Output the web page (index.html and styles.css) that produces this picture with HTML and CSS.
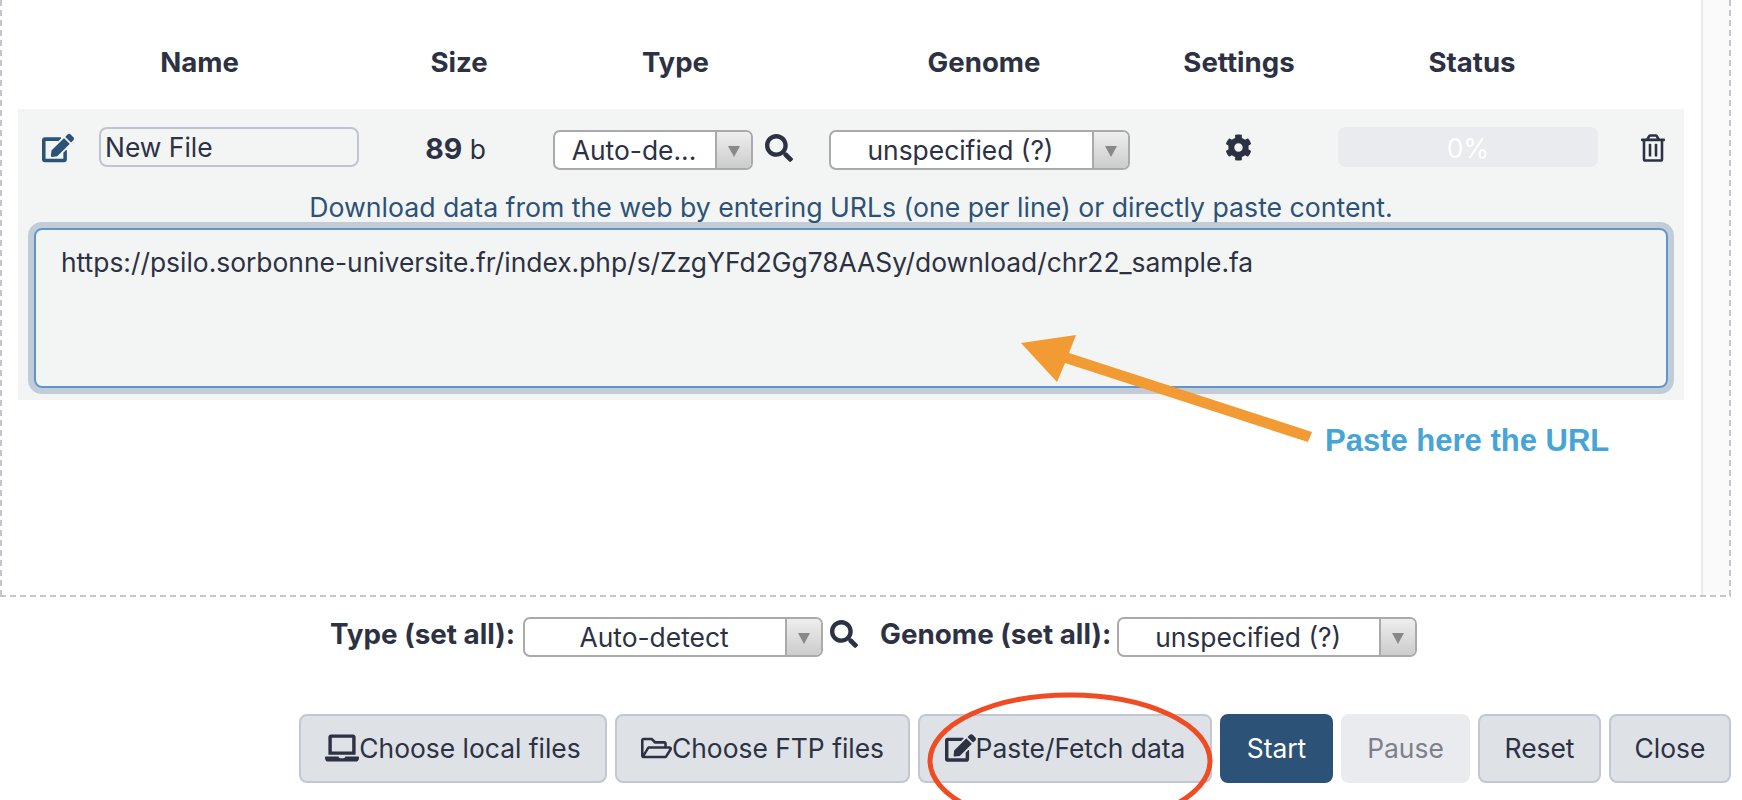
FILE: index.html
```html
<!DOCTYPE html>
<html lang="en">
  <head>
    <meta charset="UTF-8" />
    <title>Upload</title>
    <link rel="stylesheet" href="styles.css">
  </head>
  <body>
    <div class="dropzone">
      <div class="content">
        <div class="head">
          <div class="h-name">Name</div>
          <div class="h-size">Size</div>
          <div class="h-type">Type</div>
          <div class="h-genome">Genome</div>
          <div class="h-settings">Settings</div>
          <div class="h-status">Status</div>
        </div>
        <div class="row">
          <div class="cells">
            <svg class="ic ic-edit" viewBox="0 0 576 512"><path d="M402.6 83.2l90.2 90.2c3.8 3.8 3.8 10 0 13.8L274.4 405.6l-92.8 10.3c-12.4 1.4-22.9-9.1-21.5-21.5l10.3-92.8L388.8 83.2c3.8-3.8 10-3.8 13.8 0zm162-22.9l-48.8-48.8c-15.2-15.2-39.9-15.2-55.2 0l-35.4 35.4c-3.8 3.8-3.8 10 0 13.8l90.2 90.2c3.8 3.8 10 3.8 13.8 0l35.4-35.4c15.2-15.3 15.2-40 0-55.2zM384 346.2V448H64V128h229.8c3.2 0 6.2-1.3 8.5-3.5l40-40c7.6-7.6 2.2-20.5-8.5-20.5H48C21.5 64 0 85.5 0 112v352c0 26.5 21.5 48 48 48h352c26.5 0 48-21.5 48-48V306.2c0-10.7-12.9-16-20.5-8.5l-40 40c-2.2 2.3-3.5 5.3-3.5 8.5z"/></svg>
            <div class="name-input">New File</div>
            <div class="size"><b>89</b> b</div>
            <div class="combo combo-type"><span class="combo-text">Auto-de...</span><span class="combo-btn"></span></div>
            <svg class="ic ic-search" viewBox="0 0 512 512"><path d="M505 442.7L405.3 343c-4.5-4.5-10.6-7-17-7H372c27.6-35.3 44-79.7 44-128C416 93.1 322.9 0 208 0S0 93.1 0 208s93.1 208 208 208c48.3 0 92.7-16.4 128-44v16.3c0 6.4 2.5 12.5 7 17l99.7 99.7c9.4 9.4 24.6 9.4 33.9 0l28.3-28.3c9.4-9.4 9.4-24.6.1-34zM208 336c-70.7 0-128-57.2-128-128 0-70.7 57.2-128 128-128 70.7 0 128 57.2 128 128 0 70.7-57.2 128-128 128z"/></svg>
            <div class="combo combo-genome"><span class="combo-text">unspecified (?)</span><span class="combo-btn"></span></div>
            <svg class="ic ic-cog" viewBox="0 0 512 512"><path d="M487.4 315.7l-42.6-24.6c4.3-23.2 4.3-47 0-70.2l42.6-24.6c4.9-2.8 7.1-8.6 5.5-14-11.1-35.6-30-67.8-54.7-94.6-3.8-4.1-10-5.1-14.8-2.3L380.8 110c-17.9-15.4-38.5-27.3-60.8-35.1V25.8c0-5.6-3.9-10.5-9.4-11.7-36.7-8.2-74.3-7.8-109.2 0-5.5 1.2-9.4 6.1-9.4 11.7V75c-22.2 7.9-42.8 19.8-60.8 35.1L88.7 85.5c-4.9-2.8-11-1.9-14.8 2.3-24.7 26.7-43.6 58.9-54.7 94.6-1.7 5.4.6 11.2 5.5 14L67.3 221c-4.3 23.2-4.3 47 0 70.2l-42.6 24.6c-4.9 2.8-7.1 8.6-5.5 14 11.1 35.6 30 67.8 54.7 94.6 3.8 4.1 10 5.1 14.8 2.3l42.6-24.6c17.9 15.4 38.5 27.3 60.8 35.1v49.2c0 5.6 3.9 10.5 9.4 11.7 36.7 8.2 74.3 7.8 109.2 0 5.5-1.2 9.4-6.1 9.4-11.7v-49.2c22.2-7.9 42.8-19.8 60.8-35.1l42.6 24.6c4.9 2.8 11 1.9 14.8-2.3 24.7-26.7 43.6-58.9 54.7-94.6 1.5-5.5-.7-11.3-5.6-14.1zM256 336c-44.1 0-80-35.9-80-80s35.9-80 80-80 80 35.9 80 80-35.9 80-80 80z"/></svg>
            <div class="progress">0%</div>
            <svg class="ic ic-trash" viewBox="0 0 448 512"><path d="M268 416h24a12 12 0 0 0 12-12V188a12 12 0 0 0-12-12h-24a12 12 0 0 0-12 12v216a12 12 0 0 0 12 12zM432 80h-82.41l-34-56.7A48 48 0 0 0 274.41 0H173.59a48 48 0 0 0-41.16 23.3L98.41 80H16A16 16 0 0 0 0 96v16a16 16 0 0 0 16 16h16v336a48 48 0 0 0 48 48h288a48 48 0 0 0 48-48V128h16a16 16 0 0 0 16-16V96a16 16 0 0 0-16-16zM171.84 50.91A6 6 0 0 1 177 48h94a6 6 0 0 1 5.15 2.91L293.61 80H154.39zM368 464H80V128h288zm-212-48h24a12 12 0 0 0 12-12V188a12 12 0 0 0-12-12h-24a12 12 0 0 0-12 12v216a12 12 0 0 0 12 12z"/></svg>
          </div>
          <div class="help">Download data from the web by entering URLs (one per line) or directly paste content.</div>
          <div class="paste">https://psilo.sorbonne-universite.fr/index.php/s/ZzgYFd2Gg78AASy/download/chr22_sample.fa</div>
        </div>
      </div>
      <div class="scrollbar"></div>
    </div>

    <div class="set-all">
      <span class="set-label">Type (set all):</span>
      <div class="combo combo-all"><span class="combo-text">Auto-detect</span><span class="combo-btn"></span></div>
      <svg class="ic ic-search" viewBox="0 0 512 512"><path d="M505 442.7L405.3 343c-4.5-4.5-10.6-7-17-7H372c27.6-35.3 44-79.7 44-128C416 93.1 322.9 0 208 0S0 93.1 0 208s93.1 208 208 208c48.3 0 92.7-16.4 128-44v16.3c0 6.4 2.5 12.5 7 17l99.7 99.7c9.4 9.4 24.6 9.4 33.9 0l28.3-28.3c9.4-9.4 9.4-24.6.1-34zM208 336c-70.7 0-128-57.2-128-128 0-70.7 57.2-128 128-128 70.7 0 128 57.2 128 128 0 70.7-57.2 128-128 128z"/></svg>
      <span class="set-label set-genome">Genome (set all):</span>
      <div class="combo combo-all"><span class="combo-text">unspecified (?)</span><span class="combo-btn"></span></div>
    </div>

    <div class="actions">
      <div class="btn btn-local"><svg class="ic-btn" viewBox="0 0 640 512"><path d="M624 416H381.54c-.74 19.81-14.71 32-32.74 32H288c-18.69 0-33.02-17.47-32.77-32H16c-8.8 0-16 7.2-16 16v16c0 35.2 28.8 64 64 64h512c35.2 0 64-28.8 64-64v-16c0-8.8-7.2-16-16-16zM576 48c0-26.4-21.6-48-48-48H112C85.6 0 64 21.6 64 48v336h512V48zm-64 272H128V64h384v256z"/></svg>Choose local files</div>
      <div class="btn btn-ftp"><svg class="ic-btn" viewBox="0 0 576 512"><path d="M527.9 224H480v-48c0-26.5-21.5-48-48-48H272l-64-64H48C21.5 64 0 85.5 0 112v288c0 26.5 21.5 48 48 48h400c16.5 0 31.9-8.5 40.7-22.6l79.9-128c20-31.9-3-73.4-40.7-73.4zM48 118c0-3.3 2.7-6 6-6h134.1l64 64H426c3.3 0 6 2.7 6 6v42H152c-16.8 0-32.4 8.8-41.1 23.2L48 351.4zm400 282H72l77.2-128H528z"/></svg>Choose FTP files</div>
      <div class="btn btn-paste"><svg class="ic-btn" viewBox="0 0 576 512"><path d="M402.6 83.2l90.2 90.2c3.8 3.8 3.8 10 0 13.8L274.4 405.6l-92.8 10.3c-12.4 1.4-22.9-9.1-21.5-21.5l10.3-92.8L388.8 83.2c3.8-3.8 10-3.8 13.8 0zm162-22.9l-48.8-48.8c-15.2-15.2-39.9-15.2-55.2 0l-35.4 35.4c-3.8 3.8-3.8 10 0 13.8l90.2 90.2c3.8 3.8 10 3.8 13.8 0l35.4-35.4c15.2-15.3 15.2-40 0-55.2zM384 346.2V448H64V128h229.8c3.2 0 6.2-1.3 8.5-3.5l40-40c7.6-7.6 2.2-20.5-8.5-20.5H48C21.5 64 0 85.5 0 112v352c0 26.5 21.5 48 48 48h352c26.5 0 48-21.5 48-48V306.2c0-10.7-12.9-16-20.5-8.5l-40 40c-2.2 2.3-3.5 5.3-3.5 8.5z"/></svg>Paste/Fetch data</div>
      <div class="btn btn-start">Start</div>
      <div class="btn btn-pause">Pause</div>
      <div class="btn btn-reset">Reset</div>
      <div class="btn btn-close">Close</div>
    </div>

    <!-- annotations drawn on top of the screenshot -->
    <svg class="marks" viewBox="0 0 1742 800">
      <polygon class="arrow" points="1021,343 1076,335 1069,353 1312,432 1308,442 1065,363 1057,382"/>
      <ellipse class="circle" cx="1070" cy="761" rx="140" ry="66"/>
    </svg>
    <div class="note">Paste here the URL</div>
  </body>
</html>
```

FILE: styles.css
```css
html, body {
  margin: 0;
  padding: 0;
  height: 800px;
  overflow: hidden;
  background: #fff;
}
body {
  position: relative;
  font-family: "Inter", "Liberation Sans", sans-serif;
  font-size: 26.4px;
  color: #2c3143;
}
.dropzone {
  display: flex;
  box-sizing: border-box;
  width: 1731px;
  height: 597px;
  padding: 0 2px 2px;
  background:
    repeating-linear-gradient(90deg, #c1c6d2 0 6px, transparent 6px 10px) bottom left / 100% 2px no-repeat,
    repeating-linear-gradient(180deg, #c1c6d2 0 6px, transparent 6px 10px) top left / 2px 100% no-repeat,
    repeating-linear-gradient(180deg, #c1c6d2 0 6px, transparent 6px 10px) top right / 2px 100% no-repeat;
}
.content {
  flex: 1;
  padding-left: 16px;
}
.scrollbar {
  width: 26px;
  background: #fafafa;
  border-left: 2px solid #e8eaec;
}
.head {
  display: grid;
  grid-template-columns: 363px 156px 277px 340px 170px 296px;
  align-items: center;
  box-sizing: border-box;
  height: 109px;
  padding-top: 15px;
  font-size: 27.6px;
  font-weight: 700;
  text-align: center;
}
.row {
  width: 1666px;
  height: 291px;
  background: #f3f5f5;
}
.cells {
  display: grid;
  grid-template-columns: 24px 32px 25px 260px 194px 200px 12px 28px 36px 301px 95px 27px 86px 260px 43px 24px;
  grid-template-areas: ". e . n s t . q . g . c . p . d";
  align-items: center;
  height: 78px;
}
.ic {
  fill: #2c3143;
  display: block;
}
.ic-edit { grid-area: e; width: 32px; height: 30px; fill: #2c5278; }
.name-input {
  grid-area: n;
  box-sizing: border-box;
  height: 40px;
  margin-top: -2px;
  padding-left: 4px;
  border: 2px solid #bfc5d0;
  border-radius: 8px;
  line-height: 37px;
}
.size { grid-area: s; text-align: center; margin-left: -1px; }
.size b { font-size: 28.5px; }
.combo-type { grid-area: t; margin-top: 4px; }
.cells .ic-search { grid-area: q; }
.combo-genome { grid-area: g; margin-top: 4px; }
.ic-search { width: 28px; height: 28px; }
.ic-cog { grid-area: c; width: 27px; height: 27px; margin-top: -1px; }
.ic-trash { grid-area: d; width: 24px; height: 28px; margin-top: -1px; }
.progress {
  grid-area: p;
  height: 40px;
  margin-top: -2px;
  line-height: 42px;
  border-radius: 8px;
  background: #e9ebee;
  color: #fff;
  text-align: center;
}
.combo {
  display: flex;
  box-sizing: border-box;
  height: 40px;
  border: 2px solid #aaa;
  border-radius: 7px;
  background: #fff;
  overflow: hidden;
}
.combo-text {
  flex: 1;
  min-width: 0;
  padding-right: 2px;
  line-height: 36px;
  text-align: center;
  white-space: nowrap;
}
.combo-btn {
  position: relative;
  width: 34px;
  border-left: 2px solid #aaa;
  background: linear-gradient(#eee, #ccc);
}
.combo-btn::after {
  content: "";
  position: absolute;
  left: 11px;
  top: 14px;
  border-left: 6px solid transparent;
  border-right: 6px solid transparent;
  border-top: 11px solid #888;
}
.help {
  height: 41px;
  font-size: 26.65px;
  line-height: 41px;
  color: #2c5278;
  text-align: center;
}
.paste {
  box-sizing: border-box;
  height: 160px;
  margin: 0 16px;
  padding: 16px 25px;
  border: 2px solid #5f94cd;
  border-radius: 8px;
  box-shadow: 0 0 0 6px #c1ccd7;
  line-height: 32px;
}
.set-all {
  display: flex;
  align-items: center;
  height: 40px;
  margin-top: 20px;
  padding-left: 330px;
}
.set-label {
  font-size: 27.8px;
  font-weight: 700;
  margin-right: 8px;
  margin-top: -6px;
}
.set-genome { margin-left: 22px; margin-right: 6px; }
.combo-all { width: 300px; }
.set-all .ic-search { margin-left: 7px; margin-top: -6px; }
.actions {
  display: flex;
  gap: 8px;
  margin-top: 57px;
  padding-left: 299px;
}
.btn {
  display: flex;
  align-items: center;
  justify-content: center;
  box-sizing: border-box;
  height: 69px;
  padding-bottom: 2px;
  border: 2px solid #c1c7d3;
  border-radius: 8px;
  background: #dee1e6;
}
.btn-local { width: 308px; }
.btn-ftp { width: 295px; }
.btn-paste { width: 294px; }
.btn-start { width: 113px; background: #2c5278; border-color: #2c5278; color: #fff; }
.btn-pause { width: 129px; background: #e9ebef; border-color: #e9ebef; color: #7d7f8c; }
.btn-reset { width: 123px; }
.btn-close { width: 122px; }
.ic-btn { height: 30px; fill: #2c3143; }
.btn-local .ic-btn { width: 34px; }
.btn-ftp .ic-btn { width: 31px; }
.btn-paste .ic-btn { width: 31px; }
.marks {
  position: absolute;
  left: 0;
  top: 0;
  width: 1742px;
  height: 800px;
  pointer-events: none;
}
.arrow { fill: #f29a33; }
.circle { fill: none; stroke: #ef4c23; stroke-width: 5; }
.note {
  position: absolute;
  left: 1325px;
  top: 423px;
  font-family: "Liberation Sans", sans-serif;
  font-size: 31px;
  font-weight: 700;
  color: #46a5d6;
}
```
